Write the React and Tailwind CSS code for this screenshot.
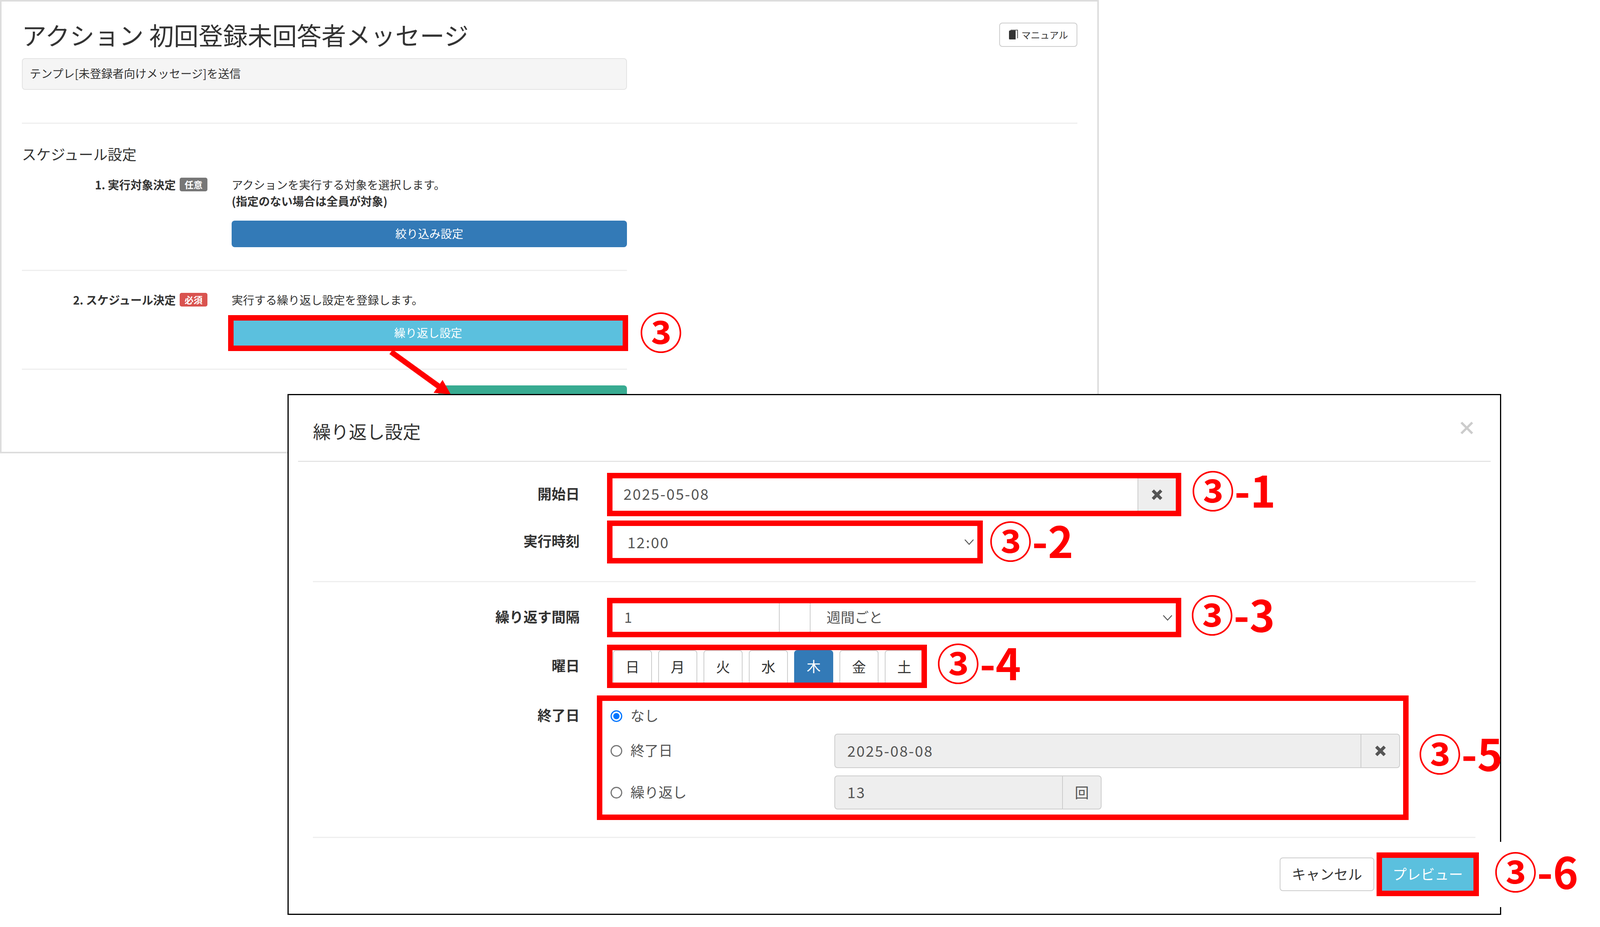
import React from "react";

const Tag = ({ children, className = "" }) => (
  <span className={`shrink-0 whitespace-nowrap text-[110px] leading-[110px] font-bold text-[#ff0000] ${className}`}>{children}</span>
);

const Label = ({ children, className = "" }) => (
  <div className={`w-[745px] shrink-0 pb-[8px] text-right text-[36px] leading-[50px] font-bold text-[#333] ${className}`}>{children}</div>
);

const Chevron = () => (
  <svg width="24" height="16" viewBox="0 0 24 16" fill="none" stroke="#555" strokeWidth="2.5">
    <path d="M1 2 L12 14 L23 2" />
  </svg>
);

const Cross = ({ size = 34 }) => (
  <svg width={size} height={size} viewBox="0 0 30 30" fill="#555">
    <path d="M3 8 L8 3 L15 10 L22 3 L27 8 L20 15 L27 22 L22 27 L15 20 L8 27 L3 22 L10 15 Z" />
  </svg>
);

const Days = ["日", "月", "火", "水", "木", "金", "土"];

const Hr = ({ className = "" }) => <div className={`h-[3px] bg-[#eee] ${className}`} />;

const Badge = ({ children, className }) => (
  <span className={`ml-[10px] flex h-[35px] w-[71px] shrink-0 items-center justify-center rounded-[5px] text-[23px] font-bold leading-none text-white ${className}`}>{children}</span>
);

const ActionRow = ({ label, badge, badgeClass, children }) => (
  <div className="flex items-start">
    <div className="flex w-[475px] shrink-0 items-center justify-end">
      <span className="text-[29px] leading-[42px] font-bold text-[#333]">{label}</span>
      <Badge className={badgeClass}>{badge}</Badge>
    </div>
    <div className="ml-[62px] w-[1012px] shrink-0">{children}</div>
  </div>
);

const radio =
  "m-0 h-[30px] w-[30px] shrink-0 appearance-none rounded-full border-[3px] border-[#767676] bg-white checked:border-[#0075ff] checked:bg-[#0075ff] checked:shadow-[inset_0_0_0_4px_white]";

export default function App() {
  return (
    <div className="relative h-[2374px] w-[4111px] overflow-hidden bg-white font-['Noto_Sans_CJK_JP','Liberation_Sans',sans-serif] text-[#333]">
      {/* Background panel */}
      <div className="h-[1161px] w-[2813px] border-4 border-[#ddd] bg-white pl-[52px] pr-[51px] pt-[48px]">
        <div className="flex h-[80px] items-start justify-between">
          <h1 className="-mt-[4px] text-[63px] leading-[80px] font-normal whitespace-nowrap text-[#333]">アクション 初回登録未回答者メッセージ</h1>
          <div className="mt-[6px] flex h-[62px] w-[200px] items-center justify-center gap-[9px] rounded-[8px] border-2 border-[#ccc] bg-white">
            <svg width="24" height="26" viewBox="0 0 24 26">
              <path d="M1 5 Q1 2 4 2 L18 2 L18 25 L3 25 Q1 25 1 23 Z" fill="#333" />
              <path d="M5 1 L23 1 L23 22" fill="none" stroke="#333" strokeWidth="1.6" />
            </svg>
            <span className="text-[24px] leading-none text-[#333]">マニュアル</span>
          </div>
        </div>
        <div className="mt-[17px] flex h-[81px] w-[1549px] items-center rounded-[8px] border-2 border-[#e3e3e3] bg-[#f5f5f5] pb-[4px] pl-[18px] text-[29px] text-[#333]">
          テンプレ[未登録者向けメッセージ]を送信
        </div>
        <Hr className="mt-[84px]" />
        <h2 className="mt-[52px] text-[37px] leading-[50px] font-normal text-[#333]">スケジュール設定</h2>

        <div className="mt-[32px] w-[1549px]">
          <ActionRow label="1. 実行対象決定" badge="任意" badgeClass="bg-[#777]">
            <p className="text-[29px] leading-[42px]">アクションを実行する対象を選択します。</p>
            <p className="text-[29px] leading-[42px] font-bold">(指定のない場合は全員が対象)</p>
            <div className="mt-[30px] flex h-[68px] items-center justify-center rounded-[8px] bg-[#337ab7] pb-[3px] text-[29px] text-white">絞り込み設定</div>
          </ActionRow>
          <Hr className="mt-[58px]" />
          <div className="mt-[52px]">
            <ActionRow label="2. スケジュール決定" badge="必須" badgeClass="bg-[#d9534f]">
              <p className="text-[29px] leading-[42px]">実行する繰り返し設定を登録します。</p>
              <div className="-ml-[9px] mt-[19px] flex h-[92px] items-center">
                <div className="flex h-[92px] w-[1024px] shrink-0 items-center justify-center border-[14px] border-[#ff0000] bg-[#5bc0de] pb-[3px] text-[29px] text-white">繰り返し設定</div>
                <Tag className="ml-[29px] mb-[14px]">③</Tag>
              </div>
            </ActionRow>
          </div>
          <Hr className="mt-[45px]" />
          <div className="ml-auto mt-[40px] h-[68px] w-[483px] rounded-[8px] bg-[#38ab91]" />
        </div>
      </div>

      {/* Arrow */}
      <svg className="absolute left-[980px] top-[895px]" width="190" height="120" viewBox="980 895 190 120">
        <path d="M1001 901 L1124 990" stroke="#ff0000" strokeWidth="14" fill="none" />
        <path d="M1110 1006 L1133 973 L1154 1010 Z" fill="#ff0000" />
      </svg>

      {/* Modal */}
      <div className="absolute left-[736px] top-[1009px] h-[1334px] w-[3107px] border-[3px] border-black bg-white">
        <div className="mx-[24px] flex h-[171px] items-center justify-between border-b-[3px] border-[#e5e5e5] pl-[38px] pr-[44px] pt-[14px]">
          <span className="text-[46px] leading-none text-[#333]">繰り返し設定</span>
          <svg width="34" height="34" viewBox="0 0 34 34" stroke="#ccc" strokeWidth="6" className="mb-[14px]">
            <path d="M3 3 L31 31 M31 3 L3 31" />
          </svg>
        </div>

        {/* 開始日 */}
        <div className="mt-[28px] flex h-[111px] items-center">
          <Label>開始日</Label>
          <div className="ml-[70px] flex h-[111px] w-[1470px] shrink-0 border-[14px] border-[#ff0000]">
            <div className="flex flex-1 items-center pb-[6px] pl-[28px] text-[38px] tracking-[2.5px] text-[#555]">2025-05-08</div>
            <div className="flex w-[98px] items-center justify-center border-l-2 border-[#ccc] bg-[#eee]"><Cross /></div>
          </div>
          <Tag className="ml-[26px] mb-[30px]">③-1</Tag>
        </div>

        {/* 実行時刻 */}
        <div className="mt-[11px] flex h-[110px] items-center">
          <Label>実行時刻</Label>
          <div className="ml-[70px] flex h-[110px] w-[962px] shrink-0 items-center justify-between border-[14px] border-[#ff0000] pl-[38px] pr-[9px] text-[38px] tracking-[2.5px] text-[#555]">
            <span className="pb-[2px]">12:00</span>
            <Chevron />
          </div>
          <Tag className="ml-[16px] mb-[14px]">③-2</Tag>
        </div>

        <Hr className="ml-[62px] mr-[62px] mt-[45px]" />

        {/* 繰り返す間隔 */}
        <div className="mt-[40px] flex h-[101px] items-center">
          <Label>繰り返す間隔</Label>
          <div className="ml-[70px] flex h-[101px] w-[1470px] shrink-0 items-stretch border-[14px] border-[#ff0000] text-[36px] text-[#555]">
            <div className="flex w-[428px] items-center border-r-2 border-[#ccc] pb-[6px] pl-[30px]">1</div>
            <div className="w-[79px] border-r-2 border-[#ccc]" />
            <div className="flex flex-1 items-center justify-between pl-[41px] pr-[9px]">
              <span className="pb-[6px]">週間ごと</span>
              <Chevron />
            </div>
          </div>
          <Tag className="ml-[24px] mb-[24px]">③-3</Tag>
        </div>

        {/* 曜日 */}
        <div className="mt-[19px] flex h-[111px] items-center">
          <Label>曜日</Label>
          <div className="ml-[70px] flex h-[111px] w-[819px] shrink-0 items-end gap-[16px] overflow-hidden border-[14px] border-[#ff0000] pl-[1px]">
            {Days.map((d) => (
              <div
                key={d}
                className={
                  d === "木"
                    ? "flex h-[83px] w-[100px] shrink-0 items-center justify-center rounded-t-[8px] bg-[#337ab7] pb-[4px] text-[36px] text-white"
                    : "flex h-[83px] w-[100px] shrink-0 items-center justify-center rounded-t-[8px] border-2 border-b-0 border-[#ccc] bg-white pb-[4px] text-[36px] text-[#333]"
                }
              >
                {d}
              </div>
            ))}
          </div>
          <Tag className="ml-[25px] mb-[26px]">③-4</Tag>
        </div>

        {/* 終了日 */}
        <div className="mt-[19px] flex items-start">
          <Label className="pt-[24px]">終了日</Label>
          <div className="ml-[44px] h-[319px] w-[2078px] shrink-0 border-[14px] border-[#ff0000] text-[36px] text-[#555]">
            <div className="flex h-[78px] items-center pl-[21px]">
              <input type="radio" name="end" defaultChecked className={radio} />
              <span className="mb-[6px] ml-[21px]">なし</span>
            </div>
            <div className="mt-[6px] flex h-[88px] items-center pl-[21px] pr-[8px]">
              <input type="radio" name="end" className={radio} />
              <span className="mb-[6px] ml-[21px] w-[522px]">終了日</span>
              <div className="flex h-full flex-1 overflow-hidden rounded-[8px] border-2 border-[#ccc] bg-[#eee]">
                <div className="flex flex-1 items-center pb-[4px] pl-[31px] text-[38px] tracking-[2.5px]">2025-08-08</div>
                <div className="flex w-[99px] items-center justify-center border-l-2 border-[#ccc]"><Cross /></div>
              </div>
            </div>
            <div className="mt-[19px] flex h-[87px] items-center pl-[21px]">
              <input type="radio" name="end" className={radio} />
              <span className="mb-[6px] ml-[21px] w-[522px]">繰り返し</span>
              <div className="flex h-full w-[684px] overflow-hidden rounded-[8px] border-2 border-[#ccc] bg-[#eee]">
                <div className="flex flex-1 items-center pb-[4px] pl-[31px] text-[38px] tracking-[2.5px]">13</div>
                <div className="flex w-[99px] items-center justify-center border-l-2 border-[#ccc] pb-[4px]">回</div>
              </div>
            </div>
          </div>
          <Tag className="ml-[25px] mt-[90px]">③-5</Tag>
        </div>

        <Hr className="ml-[62px] mr-[63px] mt-[43px]" />

        {/* Footer */}
        <div className="mt-[37px] flex items-center justify-end gap-[6px] pr-[54px]">
          <div className="flex h-[86px] w-[242px] items-center justify-center rounded-[8px] border-2 border-[#ccc] bg-white pb-[4px] text-[36px] text-[#333]">キャンセル</div>
          <div className="relative flex h-[112px] w-[262px] items-center justify-center border-[14px] border-[#ff0000] bg-[#5bc0de] pb-[4px] text-[36px] text-white">
            プレビュー
            <span className="absolute -top-[41px] left-[287px] flex h-[167px] w-[215px] items-center justify-center bg-white">
              <Tag className="mb-[24px]">③-6</Tag>
            </span>
          </div>
        </div>
      </div>
    </div>
  );
}
